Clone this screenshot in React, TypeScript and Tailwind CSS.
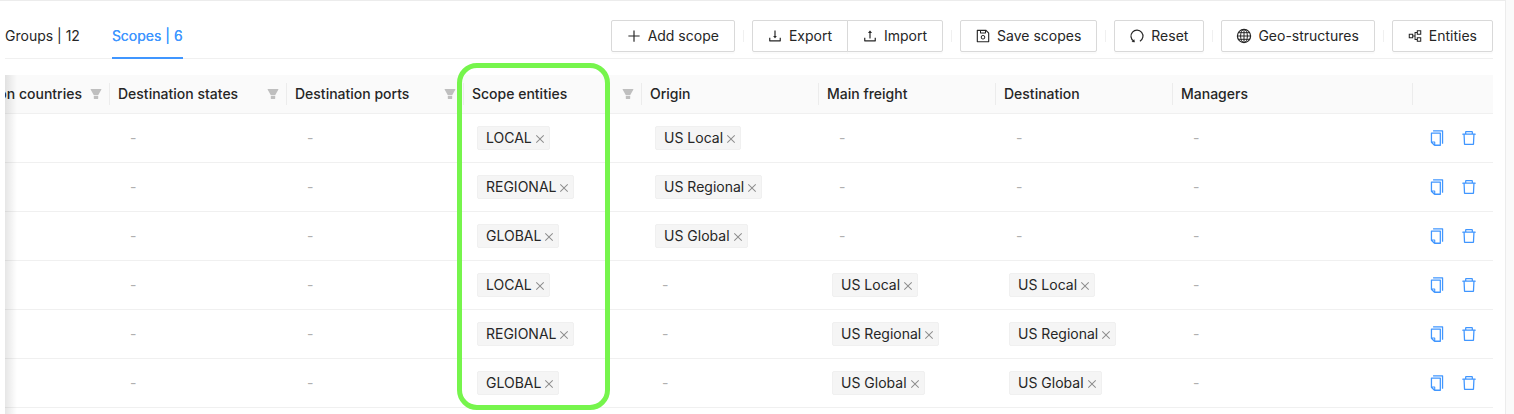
import type { ReactNode } from "react";
import {
  AiOutlineClose,
  AiOutlineCopy,
  AiOutlineDelete,
  AiOutlineDownload,
  AiOutlinePartition,
  AiOutlinePlus,
  AiOutlineSave,
  AiOutlineUpload,
} from "react-icons/ai";

const ResetIcon = () => (
  <svg viewBox="0 0 16 16" className="size-4" fill="none" stroke="currentColor" aria-hidden="true">
    <path d="M10.9 13.3A6 6 0 1 0 4.700 13.100" strokeWidth="1.2" />
    <path d="M2.600 13.900L5.900 14.200L5.300 11.300Z" fill="currentColor" stroke="none" />
  </svg>
);

const GlobeIcon = () => (
  <svg viewBox="0 0 16 16" className="size-4" fill="none" stroke="currentColor" aria-hidden="true">
    <circle cx="8" cy="8" r="6.6" strokeWidth="1.2" />
    <ellipse cx="8" cy="8" rx="3.4" ry="6.600" />
    <path d="M8 1.4V14.600M1.400 8H14.600M2.500 4.700H13.500M2.500 11.300H13.500" />
  </svg>
);

const FilterIcon = () => (
  <svg viewBox="0 0 12 12" className="size-3" fill="currentColor" aria-hidden="true">
    <path d="M.9 1h10.2c.3 0 .4.3.3.5L8.3 6.9H3.7L.6 1.5C.5 1.3.6 1 .9 1ZM3.8 7.7h4.4v2.9c0 .2-.2.4-.4.4H4.2c-.2 0-.4-.2-.4-.4Z" />
  </svg>
);

type ActionProps = { icon: ReactNode; label: string; className?: string };

const Action = ({ icon, label, className = "rounded-xs" }: ActionProps) => (
  <button
    type="button"
    className={`flex h-8 items-center gap-1.5 border border-[#d9d9d9] bg-white pr-[15px] pl-3.5 whitespace-nowrap shadow-[0_2px_0_rgba(0,0,0,0.016)] ${className}`}
  >
    {icon}
    {label}
  </button>
);

const Divider = () => <span className="mx-2 h-3 w-px bg-[#f0f0f0]" />;

const columns = [
  { title: "Destination countries", width: "w-[105px]", filter: true },
  { title: "Destination states", width: "w-[177px]", filter: true },
  { title: "Destination ports", width: "w-[177px]", filter: true },
  { title: "Scope entities", width: "w-[178px]", filter: true },
  { title: "Origin", width: "w-[177px]", filter: false },
  { title: "Main freight", width: "w-[177px]", filter: false },
  { title: "Destination", width: "w-[177px]", filter: false },
  { title: "Managers", width: "", filter: false },
];

const rows = [
  ["-", "-", "LOCAL", "US Local", "-", "-", "-"],
  ["-", "-", "REGIONAL", "US Regional", "-", "-", "-"],
  ["-", "-", "GLOBAL", "US Global", "-", "-", "-"],
  ["-", "-", "LOCAL", "-", "US Local", "US Local", "-"],
  ["-", "-", "REGIONAL", "-", "US Regional", "US Regional", "-"],
  ["-", "-", "GLOBAL", "-", "US Global", "US Global", "-"],
];

const Tag = ({ label }: { label: string }) => (
  <span className="inline-flex h-6 items-center gap-0.5 rounded-xs border border-[#f0f0f0] bg-[#f5f5f5] pr-[3px] pl-2 whitespace-nowrap">
    {label}
    <button type="button" aria-label={`Remove ${label}`} className="pt-0.5 text-[#8c8c8c]">
      <AiOutlineClose className="size-3" />
    </button>
  </span>
);

export default function App() {
  return (
    <div className="min-h-screen bg-[#fafafa] pr-2 font-['Inter',sans-serif] text-sm text-[#262626]">
      <main className="min-h-screen border-t border-r border-[#ececec] bg-white pr-3 pl-[5px]">
        <header className="flex h-[58px] items-end justify-between border-b border-[#f0f0f0]">
          <nav className="-mb-px flex gap-8">
            <a href="#groups" className="border-b-2 border-transparent pb-[11px] leading-5">
              Groups | 12
            </a>
            <a
              href="#scopes"
              aria-current="page"
              className="border-b-2 border-[#4096ff] pb-[11px] leading-5 text-[#4096ff] [text-shadow:0_0_0.5px_currentColor]"
            >
              Scopes | 6
            </a>
          </nav>
          <div className="mb-1.5 flex items-center">
            <Action icon={<AiOutlinePlus className="size-4" />} label="Add scope" />
            <Divider />
            <Action icon={<AiOutlineDownload className="size-4" />} label="Export" className="rounded-l-xs" />
            <Action icon={<AiOutlineUpload className="size-4" />} label="Import" className="-ml-px rounded-r-xs" />
            <Divider />
            <Action icon={<AiOutlineSave className="size-4" />} label="Save scopes" />
            <Divider />
            <Action icon={<ResetIcon />} label="Reset" />
            <Divider />
            <Action icon={<GlobeIcon />} label="Geo-structures" />
            <Divider />
            <Action icon={<AiOutlinePartition className="size-4" />} label="Entities" />
          </div>
        </header>

        <section className="relative mt-4 pb-1.5">
          <table className="w-full table-fixed border-separate border-spacing-0">
            <thead>
              <tr className="h-[39px] bg-[#fafafa]">
                {columns.map(({ title, width, filter }, index) => (
                  <th key={title} className={`border-b border-[#f0f0f0] p-0 text-left font-medium ${width}`}>
                    <div
                      className={`flex h-[22px] items-center overflow-hidden border-r border-[#ececec] pr-[7px] pl-2 whitespace-nowrap ${
                        index === 0 ? "justify-end gap-2" : "justify-between"
                      }`}
                    >
                      <span>{title}</span>
                      {filter && (
                        <button type="button" aria-label={`Filter ${title}`} className="text-[#bfbfbf]">
                          <FilterIcon />
                        </button>
                      )}
                    </div>
                  </th>
                ))}
                <th aria-label="Actions" className="w-20 border-b border-[#f0f0f0]" />
              </tr>
            </thead>
            <tbody>
              {rows.map((cells, rowIndex) => (
                <tr key={rowIndex} className="h-[49px]">
                  <td className="border-b border-[#f0f0f0]" />
                  {cells.map((value, cellIndex) => (
                    <td key={cellIndex} className="border-b border-[#f0f0f0] p-0 pl-[13px]">
                      {value === "-" ? (
                        <span className="pl-[7px] text-[#b0b0b0]">-</span>
                      ) : (
                        <div className="flex">
                          <Tag label={value} />
                        </div>
                      )}
                    </td>
                  ))}
                  <td className="border-b border-[#f0f0f0] p-0">
                    <div className="flex justify-end gap-3.5 pr-[15px] text-[#4096ff]">
                      <button type="button" aria-label="Copy scope">
                        <AiOutlineCopy className="size-[18px]" />
                      </button>
                      <button type="button" aria-label="Delete scope">
                        <AiOutlineDelete className="size-[18px]" />
                      </button>
                    </div>
                  </td>
                </tr>
              ))}
            </tbody>
          </table>
          <div className="pointer-events-none absolute inset-y-0 left-0 w-3 bg-linear-to-r from-black/10 to-transparent" />
          <div className="pointer-events-none absolute -top-3 bottom-1 left-[452px] w-[153px] rounded-[20px] border-[5px] border-[#76f54c]" />
        </section>
      </main>
    </div>
  );
}
